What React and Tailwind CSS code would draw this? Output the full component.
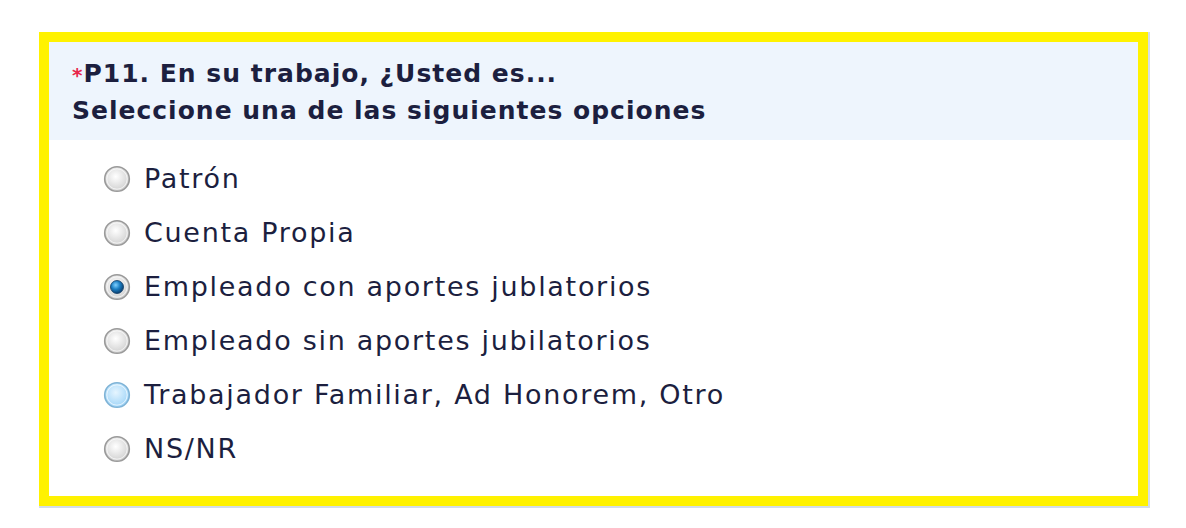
const options = [
  { label: 'Patrón', state: 'off' },
  { label: 'Cuenta Propia', state: 'off' },
  { label: 'Empleado con aportes jublatorios', state: 'on' },
  { label: 'Empleado sin aportes jubilatorios', state: 'off' },
  { label: 'Trabajador Familiar, Ad Honorem, Otro', state: 'hover' },
  { label: 'NS/NR', state: 'off' },
];

const Radio = ({ state, id }) => {
  const hover = state === 'hover';
  return (
    <svg width="28" height="28" viewBox="0 0 28 28" className="shrink-0">
      <defs>
        <radialGradient id={`g${id}`} cx="45%" cy="40%" r="60%">
          <stop offset="0%" stopColor={hover ? '#e6f5ff' : '#ffffff'} />
          <stop offset="100%" stopColor={hover ? '#9fd4f7' : '#cfcfcf'} />
        </radialGradient>
        <radialGradient id={`d${id}`} cx="40%" cy="35%" r="65%">
          <stop offset="0%" stopColor="#7fd0ff" />
          <stop offset="50%" stopColor="#1b7fc4" />
          <stop offset="100%" stopColor="#0b3f70" />
        </radialGradient>
      </defs>
      <circle cx="14" cy="14" r="12.3" fill={`url(#g${id})`} stroke={hover ? '#7fb3d6' : '#9a9a9a'} strokeWidth="1.6" />
      <circle cx="14" cy="14" r="10.2" fill="none" stroke="#ffffff" strokeOpacity="0.7" strokeWidth="1" />
      {state === 'on' && <circle cx="14" cy="14" r="6.5" fill={`url(#d${id})`} stroke="#0e3a63" strokeWidth="0.8" />}
    </svg>
  );
};

export default function App() {
  return (
    <div className="w-[1186px] h-[528px] bg-white pt-[32px] pl-[39px]" style={{ fontFamily: 'Verdana, "DejaVu Sans", sans-serif' }}>
      <div className="w-[1109px] h-[474px] border-[10px] border-[#fff200] shadow-[1px_1px_0_1px_#d3dde8] bg-white">
        <div className="bg-[#eef5fd] h-[98px] pl-[23px] pt-[14px] text-[25px] leading-[35px] tracking-[1px] font-bold text-[#1c1f3f]">
          <div><span className="text-[#e8264a] text-[20px]">*</span>P11. En su trabajo, ¿Usted es...</div>
          <div>Seleccione una de las siguientes opciones</div>
        </div>
        <div className="pl-[54px] pt-[25px] flex flex-col gap-[26px] text-[27px] leading-[28px] tracking-[1.7px] text-[#1c1f3f]">
          {options.map((o, i) => (
            <label key={i} className="flex items-center gap-[13px]">
              <Radio state={o.state} id={i} />
              <span>{o.label}</span>
            </label>
          ))}
        </div>
      </div>
    </div>
  );
}
